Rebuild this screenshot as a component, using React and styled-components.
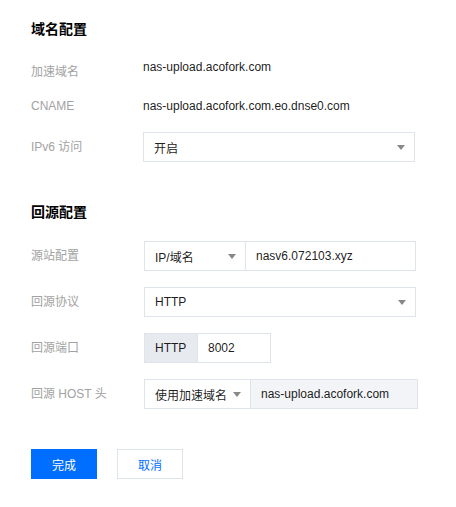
import React from 'react';
import styled, { createGlobalStyle } from 'styled-components';

const GlobalStyle = createGlobalStyle`
  html, body {
    margin: 0;
    padding: 0;
    background: #fff;
  }
  body {
    font-family: "Liberation Sans", Arial, "Noto Sans CJK SC", sans-serif;
    font-size: 12px;
    color: rgba(0, 0, 0, 0.9);
  }
`;

const Page = styled.div`
  width: 456px;
  height: 507px;
  box-sizing: border-box;
  padding: 19px 0 0 31px;
`;

const SectionTitle = styled.h3`
  margin: ${(p) => p.$mt || 0}px 0 0;
  font-size: 14px;
  line-height: 20px;
  font-weight: 700;
  color: #000;
`;

const FormItem = styled.div`
  display: flex;
  align-items: center;
  min-height: 30px;
  margin-top: ${(p) => p.$mt || 0}px;
`;

const Label = styled.div`
  flex: 0 0 ${(p) => p.$w || 112}px;
  color: #a2a2a2;
  line-height: 18px;
`;

const Text = styled.div`
  line-height: 18px;
  padding-bottom: ${(p) => p.$raise || 0}px;
  color: rgba(0, 0, 0, 0.9);
`;

const Group = styled.div`
  display: flex;
  height: 30px;
  box-sizing: border-box;
  width: ${(p) => p.$w}px;
  border: 1px solid #dfe3ea;
  background: #fff;
`;

const SelectBox = styled.div`
  display: flex;
  align-items: center;
  justify-content: space-between;
  box-sizing: border-box;
  height: 100%;
  padding: 0 9px 0 10px;
  flex: ${(p) => (p.$w ? `0 0 ${p.$w}px` : '1')};
  & + & {
    border-left: 1px solid #dfe3ea;
  }
`;

const Field = styled.div`
  display: flex;
  align-items: center;
  flex: 1;
  height: 100%;
  padding: 0 10px;
  border-left: 1px solid #dfe3ea;
  background: ${(p) => (p.$disabled ? '#f3f4f7' : '#fff')};
`;

const Addon = styled.div`
  display: flex;
  align-items: center;
  flex: 0 0 52px;
  box-sizing: border-box;
  padding-left: 10px;
  height: 100%;
  background: #e7eaef;
`;

const Caret = styled.span`
  width: 0;
  height: 0;
  border-left: 4px solid transparent;
  border-right: 4px solid transparent;
  border-top: 5px solid #888;
  margin-left: 6px;
`;

const Actions = styled.div`
  display: flex;
  gap: 20px;
  margin-top: 40px;
`;

const Button = styled.button`
  width: 66px;
  height: 30px;
  box-sizing: border-box;
  font-family: inherit;
  font-size: 12px;
  cursor: pointer;
  border: 1px solid ${(p) => (p.$primary ? '#006eff' : '#dfe3ea')};
  background: ${(p) => (p.$primary ? '#006eff' : '#fff')};
  color: ${(p) => (p.$primary ? '#fff' : '#006eff')};
`;

function Select({ value, width }) {
  return (
    <SelectBox $w={width}>
      <span>{value}</span>
      <Caret />
    </SelectBox>
  );
}

export default function App() {
  return (
    <>
      <GlobalStyle />
      <Page>
        <SectionTitle>域名配置</SectionTitle>
        <FormItem $mt={18}>
          <Label>加速域名</Label>
          <Text $raise={10}>nas-upload.acofork.com</Text>
        </FormItem>
        <FormItem $mt={4}>
          <Label>CNAME</Label>
          <Text>nas-upload.acofork.com.eo.dnse0.com</Text>
        </FormItem>
        <FormItem $mt={11}>
          <Label>IPv6 访问</Label>
          <Group $w={272}>
            <Select value="开启" />
          </Group>
        </FormItem>

        <SectionTitle $mt={40}>回源配置</SectionTitle>
        <FormItem $mt={19}>
          <Label $w={113}>源站配置</Label>
          <Group $w={272}>
            <Select value="IP/域名" width={100} />
            <Field>nasv6.072103.xyz</Field>
          </Group>
        </FormItem>
        <FormItem $mt={16}>
          <Label $w={113}>回源协议</Label>
          <Group $w={272}>
            <Select value="HTTP" />
          </Group>
        </FormItem>
        <FormItem $mt={16}>
          <Label $w={113}>回源端口</Label>
          <Group $w={127}>
            <Addon>HTTP</Addon>
            <Field>8002</Field>
          </Group>
        </FormItem>
        <FormItem $mt={16}>
          <Label $w={113}>回源 HOST 头</Label>
          <Group $w={274}>
            <Select value="使用加速域名" width={105} />
            <Field $disabled>nas-upload.acofork.com</Field>
          </Group>
        </FormItem>

        <Actions>
          <Button $primary>完成</Button>
          <Button>取消</Button>
        </Actions>
      </Page>
    </>
  );
}
